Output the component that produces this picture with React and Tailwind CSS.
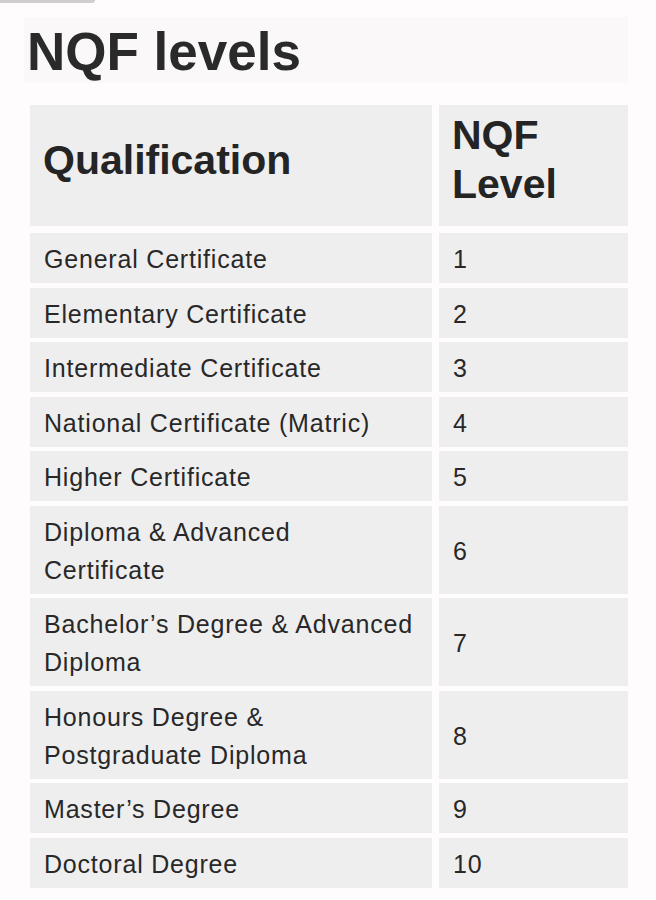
const rows = [
  { name: ["General Certificate"], level: "1" },
  { name: ["Elementary Certificate"], level: "2" },
  { name: ["Intermediate Certificate"], level: "3" },
  { name: ["National Certificate (Matric)"], level: "4" },
  { name: ["Higher Certificate"], level: "5" },
  { name: ["Diploma & Advanced", "Certificate"], level: "6" },
  { name: ["Bachelor\u2019s Degree & Advanced", "Diploma"], level: "7" },
  { name: ["Honours Degree &", "Postgraduate Diploma"], level: "8" },
  { name: ["Master\u2019s Degree"], level: "9" },
  { name: ["Doctoral Degree"], level: "10" },
];

function Row({ name, level }) {
  return (
    <div className="grid grid-cols-[402px_189px] gap-x-[7px] text-[25px] leading-[38px] tracking-[0.8px]">
      <div className="bg-[#efeeef] pl-[14px] pt-[7px] pb-[5px]">
        {name.map((line) => (
          <div key={line} className="whitespace-nowrap">{line}</div>
        ))}
      </div>
      <div className="bg-[#efeeef] pl-[14px] pt-[7px] pb-[5px] flex items-center">
        {level}
      </div>
    </div>
  );
}

export default function App() {
  return (
    <div className="w-[656px] h-[900px] bg-[#fefcfd] text-[#282828] font-['Liberation_Sans',Arial,sans-serif] overflow-hidden">
      {/* smudge left over from the crop */}
      <div className="w-[95px] h-[3px] bg-[#cfcece] rounded-br-[3px]" />

      <div className="mt-[14px] ml-[24px] w-[604px] h-[66px] bg-[#fbf8f9] pl-[3px]">
        <h1 className="text-[53px] leading-[70px] font-bold text-[#2a2a2a]">NQF levels</h1>
      </div>

      <div className="mt-[22px] ml-[30px] w-[598px]">
        {/* header */}
        <div className="grid grid-cols-[402px_189px] gap-x-[7px] text-[41px] leading-[49px] font-bold text-[#242424]">
          <div className="bg-[#efeeef] pl-[13px] pt-[6px] pb-[17px] flex items-center">Qualification</div>
          <div className="bg-[#efeeef] pl-[13px] pt-[6px] pb-[17px]">
            <div>NQF</div>
            <div>Level</div>
          </div>
        </div>

        <div className="mt-[7px] flex flex-col gap-y-[4.5px]">
          {rows.map((r) => (
            <Row key={r.level} name={r.name} level={r.level} />
          ))}
        </div>
      </div>
    </div>
  );
}
